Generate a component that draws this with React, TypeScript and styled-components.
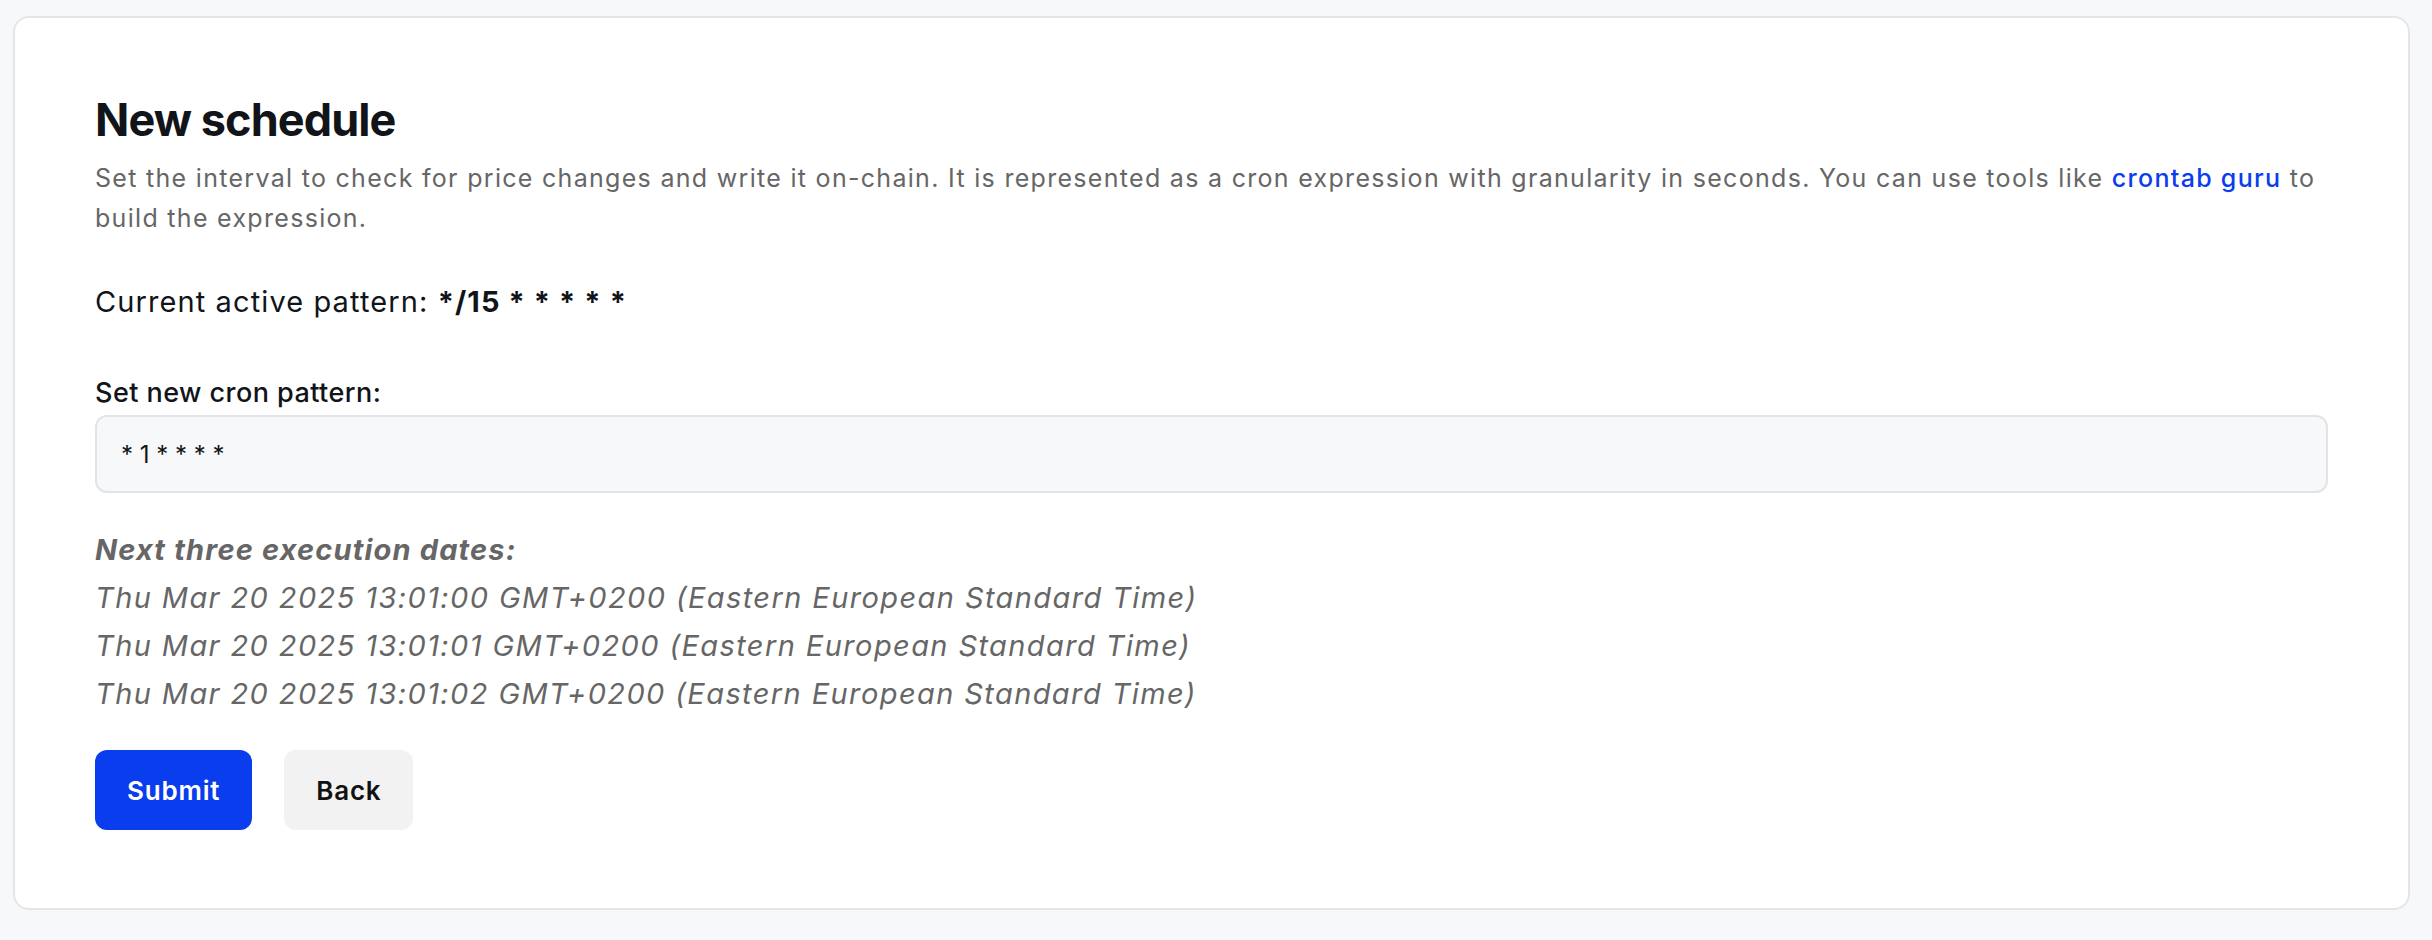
import styled, { createGlobalStyle } from "styled-components";

const GlobalStyle = createGlobalStyle`
  body {
    margin: 0;
    background: #f7f8fa;
    font-family: Inter, "Noto Sans", sans-serif;
    color: #111418;
  }
`;

const Page = styled.div`
  padding: 16px 22px 30px 13px;
`;

const Card = styled.section`
  background: #ffffff;
  border: 2px solid #e4e5e8;
  border-radius: 16px;
  padding: 75px 80px 78px;
`;

const Title = styled.h1`
  margin: 0;
  font-size: 45px;
  line-height: 54px;
  font-weight: 700;
  letter-spacing: -0.9px;
  color: #111418;
`;

const Description = styled.p`
  margin: 11px 0 0;
  font-size: 25px;
  line-height: 40px;
  letter-spacing: 1.3px;
  color: #666666;
`;

const Link = styled.a`
  color: #0a3ded;
  font-weight: 500;
  text-decoration: none;
`;

const Current = styled.p`
  margin: 44px 0 0;
  font-size: 29px;
  line-height: 40px;
  letter-spacing: 1.1px;
  color: #111418;

  strong {
    font-weight: 700;
  }
`;

const Label = styled.label`
  display: block;
  margin-top: 53px;
  font-size: 27px;
  line-height: 36px;
  font-weight: 500;
  letter-spacing: 0.45px;
  color: #111418;
`;

const Input = styled.input`
  display: block;
  box-sizing: border-box;
  width: 100%;
  height: 78px;
  margin-top: 4px;
  padding: 0 24px;
  background: #f7f8fa;
  border: 2px solid #e2e4e8;
  border-radius: 12px;
  font-family: Inter, sans-serif;
  font-size: 24px;
  color: #111418;
  outline: none;
`;

const Dates = styled.div`
  margin-top: 33px;
  font-size: 29px;
  line-height: 48px;
  font-style: italic;
  letter-spacing: 1.4px;
  color: #666666;
`;

const DatesTitle = styled.div`
  font-weight: 700;
  letter-spacing: 1.15px;
`;

const Actions = styled.div`
  display: flex;
  gap: 32px;
  margin-top: 32px;
`;

const Button = styled.button<{ $primary?: boolean }>`
  height: 80px;
  padding: 0 32px;
  border: none;
  border-radius: 12px;
  font-family: Inter, sans-serif;
  font-size: 26px;
  font-weight: 600;
  letter-spacing: 0.8px;
  background: ${(p) => (p.$primary ? "#0a3ded" : "#f2f2f2")};
  color: ${(p) => (p.$primary ? "#ffffff" : "#111111")};
  cursor: pointer;
`;

const nextDates = [
  "Thu Mar 20 2025 13:01:00 GMT+0200 (Eastern European Standard Time)",
  "Thu Mar 20 2025 13:01:01 GMT+0200 (Eastern European Standard Time)",
  "Thu Mar 20 2025 13:01:02 GMT+0200 (Eastern European Standard Time)",
];

export default function App() {
  return (
    <>
      <GlobalStyle />
      <Page>
        <Card>
          <Title>New schedule</Title>
          <Description>
            Set the interval to check for price changes and write it on-chain. It is represented as a cron
            expression with granularity in seconds. You can use tools like{" "}
            <Link href="#">crontab guru</Link> to build the expression.
          </Description>
          <Current>
            Current active pattern: <strong>*/15 * * * * *</strong>
          </Current>
          <Label htmlFor="cron">Set new cron pattern:</Label>
          <Input id="cron" defaultValue="* 1 * * * *" />
          <Dates>
            <DatesTitle>Next three execution dates:</DatesTitle>
            {nextDates.map((d) => (
              <div key={d}>{d}</div>
            ))}
          </Dates>
          <Actions>
            <Button $primary>Submit</Button>
            <Button>Back</Button>
          </Actions>
        </Card>
      </Page>
    </>
  );
}
